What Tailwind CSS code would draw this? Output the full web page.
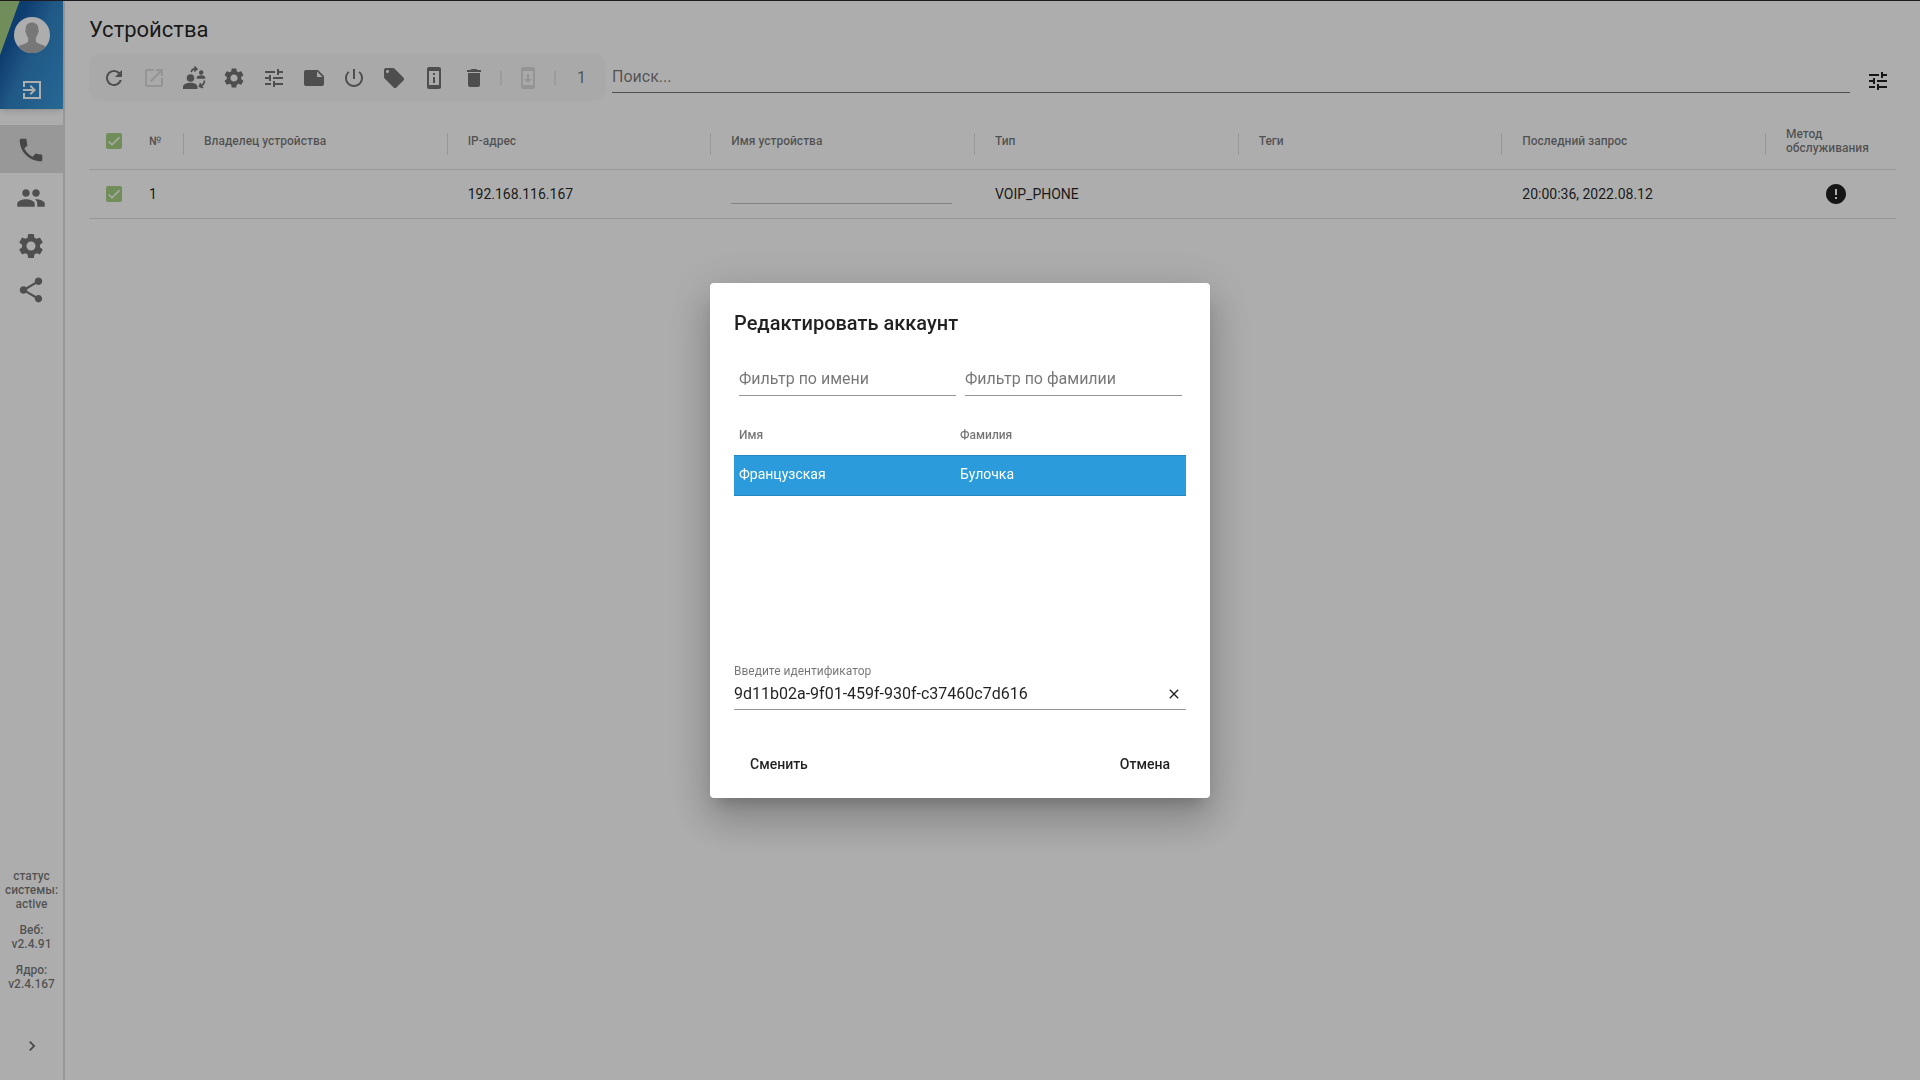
<!DOCTYPE html>
<html lang="ru">
<head>
<meta charset="utf-8">
<title>Устройства</title>
<script src="https://cdn.jsdelivr.net/npm/@tailwindcss/browser@4"></script>
</head>
<body class="bg-white font-[Roboto,sans-serif] text-sm text-black/87">
<svg class="hidden">
  <symbol id="tune" viewBox="0 0 24 24"><path d="M3 17v2h6v-2H3zM3 5v2h10V5H3zm10 16v-2h8v-2h-8v-2h-2v6h2zM7 9v2H3v2h4v2h2V9H7zm14 4v-2H11v2h10zm-6-4h2V7h4V5h-4V3h-2v6z"/></symbol>
  <symbol id="check" viewBox="0 0 24 24"><path d="M4 12.700L9 17.600 20.300 6.300" fill="none" stroke="#fff" stroke-width="2.200"/></symbol>
  <symbol id="gear" viewBox="0 0 24 24"><path d="M19.14 12.94c.04-.3.06-.61.06-.94 0-.32-.02-.64-.07-.94l2.03-1.58c.18-.14.23-.41.12-.61l-1.92-3.32c-.12-.22-.37-.29-.59-.22l-2.39.96c-.5-.38-1.03-.7-1.62-.94l-.36-2.54c-.04-.24-.24-.41-.48-.41h-3.84c-.24 0-.43.17-.47.41l-.36 2.54c-.59.24-1.13.57-1.62.94l-2.39-.96c-.22-.08-.47 0-.59.22L2.74 8.87c-.12.21-.08.47.12.61l2.03 1.58c-.05.3-.09.63-.09.94s.02.64.07.94l-2.03 1.58c-.18.14-.23.41-.12.61l1.92 3.32c.12.22.37.29.59.22l2.39-.96c.5.38 1.03.7 1.62.94l.36 2.54c.05.24.24.41.48.41h3.84c.24 0 .44-.17.47-.41l.36-2.54c.59-.24 1.13-.56 1.62-.94l2.39.96c.22.08.47 0 .59-.22l1.92-3.32c.12-.22.07-.47-.12-.61l-2.01-1.58zM12 15.6c-1.98 0-3.6-1.62-3.6-3.6s1.62-3.6 3.6-3.6 3.6 1.62 3.6 3.6-1.62 3.6-3.6 3.6z"/></symbol>
</svg>

<div class="flex min-h-screen">
  <aside class="flex w-[65px] shrink-0 flex-col border-r-2 border-black/12">
    <header class="relative flex h-[109px] flex-col items-center overflow-hidden bg-linear-115 from-[#165ba5] from-25% via-[#3083c6] via-50% to-[#3a9ada] shadow-md">
      <svg class="absolute top-0 left-0 h-[55px] w-5 fill-[#a7d285]" viewBox="0 0 20 55" preserveAspectRatio="none"><path d="M0 0h20L0 55z"/></svg>
      <svg class="relative mt-[17px] size-9" viewBox="0 0 36 36" aria-hidden="true"><circle cx="18" cy="18" r="18" fill="#fff"/><path d="M11.700 13c-.4-5 2.300-7.500 6.300-7.500s6.700 2.500 6.300 7.500c.7.300.3 3-.5 3.600-.4 2-1.200 3.400-2 4.400v3.600c1 2.100 8 3.200 9.900 5.200A18 18 0 0 1 4.300 29.800c1.900-2 8.900-3.100 9.900-5.200V21c-.8-1-1.600-2.400-2-4.400-.8-.6-1.200-3.300-.5-3.600z" fill="#b0b0b0"/></svg>
      <button class="mt-[25px] flex size-6 items-center justify-center" aria-label="Выйти">
        <svg class="size-6 fill-white" viewBox="0 0 24 24"><path d="M3 3h18v18H3v-6h2v4h14V5H5v4H3zM11 7l5 5-5 5-1.400-1.400 2.600-2.600H3v-2h9.200L9.600 8.400z"/></svg>
      </button>
    </header>
    <nav class="flex flex-col pt-4 text-black/54">
      <a href="#" class="flex h-12 items-center justify-center bg-black/12 pt-0.5 pr-0.5" aria-label="Устройства"><svg class="size-[30px] fill-current" viewBox="0 0 24 24"><path d="M6.620 10.790c1.440 2.830 3.760 5.140 6.590 6.590l2.200-2.200c.27-.27.67-.36 1.020-.24 1.120.37 2.330.57 3.570.57.55 0 1 .45 1 1V20c0 .55-.45 1-1 1-9.390 0-17-7.610-17-17 0-.55.45-1 1-1h3.500c.55 0 1 .45 1 1 0 1.250.2 2.450.57 3.570.11.35.03.74-.25 1.020l-2.200 2.200z"/></svg></a>
      <a href="#" class="flex h-12 items-center justify-center pt-0.5 pr-0.5" aria-label="Пользователи"><svg class="size-[30px] fill-current" viewBox="0 0 24 24"><path d="M16 11c1.660 0 2.990-1.340 2.990-3S17.660 5 16 5c-1.660 0-3 1.340-3 3s1.340 3 3 3zm-8 0c1.660 0 2.990-1.340 2.990-3S9.660 5 8 5C6.340 5 5 6.340 5 8s1.340 3 3 3zm0 2c-2.330 0-7 1.170-7 3.500V19h14v-2.500c0-2.330-4.670-3.500-7-3.500zm8 0c-.29 0-.62.02-.97.05 1.160.84 1.970 1.970 1.970 3.450V19h6v-2.500c0-2.330-4.670-3.500-7-3.500z"/></svg></a>
      <a href="#" class="flex h-12 items-center justify-center pt-0.5 pr-0.5" aria-label="Настройки"><svg class="size-[30px] fill-current"><use href="#gear"/></svg></a>
      <a href="#" class="flex h-10 items-center justify-center pt-0.5 pr-0.5" aria-label="Связи"><svg class="size-[30px] fill-current" viewBox="0 0 24 24"><path d="M18 16.080c-.76 0-1.440.3-1.960.77L8.910 12.700c.05-.23.09-.46.09-.7s-.04-.47-.09-.7l7.050-4.110c.54.5 1.250.81 2.040.81 1.660 0 3-1.340 3-3s-1.340-3-3-3-3 1.340-3 3c0 .24.04.47.09.7L8.040 9.810C7.500 9.310 6.790 9 6 9c-1.660 0-3 1.340-3 3s1.340 3 3 3c.79 0 1.500-.31 2.040-.81l7.120 4.160c-.05.21-.08.43-.08.65 0 1.610 1.310 2.920 2.920 2.920s2.920-1.310 2.920-2.920-1.310-2.920-2.920-2.920z"/></svg></a>
    </nav>
    <div class="mt-auto flex flex-col gap-3 pb-[43px] text-center text-xs leading-[14px] font-medium text-black/54">
      <p>статус системы: active</p>
      <p>Веб:<br>v2.4.91</p>
      <p>Ядро:<br>v2.4.167</p>
    </div>
    <button class="mb-[22px] flex h-6 items-center justify-center" aria-label="Развернуть меню"><svg class="size-5 fill-black/60" viewBox="0 0 24 24"><path d="M10 6L8.590 7.410 13.170 12l-4.580 4.590L10 18l6-6z"/></svg></button>
  </aside>

  <main class="min-w-0 flex-1 px-6">
    <h1 class="pt-3.5 text-[22px] leading-8">Устройства</h1>
    <div class="mt-[7px] flex h-12 items-center">
      <div class="flex h-12 shrink-0 items-center rounded-xl bg-black/2 pt-0.5 pr-5 pl-[5px] text-black/54" role="toolbar">
        <button class="flex size-10 items-center justify-center" aria-label="Обновить"><svg class="size-6 fill-current" viewBox="0 0 24 24"><path d="M17.650 6.350C16.200 4.900 14.210 4 12 4c-4.420 0-7.990 3.580-7.990 8s3.570 8 7.990 8c3.730 0 6.840-2.550 7.730-6h-2.080c-.82 2.330-3.040 4-5.650 4-3.310 0-6-2.690-6-6s2.690-6 6-6c1.660 0 3.140.69 4.220 1.780L13 11h7V4l-2.350 2.350z"/></svg></button>
        <button disabled class="flex size-10 items-center justify-center text-black/12" aria-label="Открыть"><svg class="size-6 fill-current" viewBox="0 0 24 24"><path d="M19 19H5V5h7V3H5c-1.110 0-2 .9-2 2v14c0 1.100.89 2 2 2h14c1.100 0 2-.9 2-2v-7h-2v7zM14 3v2h3.590l-9.830 9.830 1.410 1.410L19 6.410V10h2V3h-7z"/></svg></button>
        <button class="flex size-10 items-center justify-center" aria-label="Сменить владельца"><svg class="size-6 fill-current" viewBox="0 0 24 24"><circle cx="8.500" cy="12" r="3.800"/><path d="M1 23v-2.200c0-2.700 4.500-4 7.500-4s7 1.300 7 4V23z"/><circle cx="19.200" cy="6.500" r="2.200"/><path d="M14.700 12.800v-1.200c0-1.600 2.700-2.400 4.500-2.400s4 .8 4 2.400v1.200z"/><path d="M8.500 6c.3-2.400 2-3.800 4.300-3.900L11.700.9 12.900 0l3.200 3-3.200 3-1.100-1 1.100-1.300c-1.500.1-2.500.9-2.900 2.600zM21.600 14.500h1.600c0 2.600-1 4.600-3.200 5.700l1.500.9-.6 1.300-4.400-1.300 1.300-4.300 1.400.4-.4 1.600c1.800-.8 2.800-2.200 2.800-4.300z"/></svg></button>
        <button class="flex size-10 items-center justify-center" aria-label="Настройки"><svg class="size-6 fill-current"><use href="#gear"/></svg></button>
        <button class="flex size-10 items-center justify-center" aria-label="Параметры"><svg class="size-6 fill-current"><use href="#tune"/></svg></button>
        <button class="flex size-10 items-center justify-center" aria-label="Заметка"><svg class="size-6 fill-current" viewBox="0 0 24 24"><path d="M14 4H4c-1.100 0-2 .9-2 2v12.010c0 1.100.9 1.990 2 1.990h16c1.100 0 2-.9 2-2v-8l-6-6z M15 5.500l5.500 5.500H15z" fill-rule="evenodd"/></svg></button>
        <button class="flex size-10 items-center justify-center" aria-label="Питание"><svg class="size-6 fill-current" viewBox="0 0 24 24"><path d="M13 3h-2v10h2V3zm4.830 2.170l-1.420 1.420C17.990 7.860 19 9.810 19 12c0 3.870-3.130 7-7 7s-7-3.130-7-7c0-2.190 1.010-4.140 2.580-5.420L6.170 5.170C4.230 6.820 3 9.260 3 12c0 4.970 4.030 9 9 9s9-4.030 9-9c0-2.740-1.230-5.180-3.170-6.830z"/></svg></button>
        <button class="flex size-10 items-center justify-center" aria-label="Теги"><svg class="size-6 fill-current" viewBox="0 0 24 24"><path d="M21.410 11.580l-9-9C12.050 2.220 11.550 2 11 2H4c-1.100 0-2 .9-2 2v7c0 .55.22 1.050.59 1.420l9 9c.36.36.86.58 1.410.58.55 0 1.050-.22 1.410-.59l7-7c.37-.36.59-.86.59-1.410 0-.55-.23-1.060-.59-1.420zM5.500 7C4.670 7 4 6.330 4 5.500S4.670 4 5.500 4 7 4.670 7 5.500 6.330 7 5.500 7z"/></svg></button>
        <button class="flex size-10 items-center justify-center" aria-label="Информация"><svg class="size-6 fill-current" viewBox="0 0 24 24"><path d="M17 1.010L7 1c-1.100 0-2 .9-2 2v18c0 1.100.9 2 2 2h10c1.100 0 2-.9 2-2V3c0-1.100-.9-1.990-2-1.990zM17 19H7V5h10v14zM11 7h2v2h-2zM11 11h2v6h-2z"/></svg></button>
        <button class="flex size-10 items-center justify-center" aria-label="Удалить"><svg class="size-6 fill-current" viewBox="0 0 24 24"><path d="M6 19c0 1.100.9 2 2 2h8c1.100 0 2-.9 2-2V7H6v12zM19 4h-3.500l-1-1h-5l-1 1H5v2h14V4z"/></svg></button>
        <span class="mx-[6px] h-3.5 w-[2px] bg-black/8"></span>
        <button disabled class="flex size-10 items-center justify-center text-black/12" aria-label="Обновить прошивку"><svg class="size-6 fill-current" viewBox="0 0 24 24"><path d="M17 1.010L7 1c-1.100 0-2 .9-2 2v18c0 1.100.9 2 2 2h10c1.100 0 2-.9 2-2V3c0-1.100-.9-1.990-2-1.990zM17 19H7V5h10v14zM16 13h-3V8h-2v5H8l4 4z"/></svg></button>
        <span class="mx-[6px] h-3.5 w-[2px] bg-black/8"></span>
        <span class="ml-[15px] text-base">1</span>
      </div>
      <input type="search" placeholder="Поиск..." aria-label="Поиск" class="my-[7px] ml-1.5 h-8 min-w-0 flex-1 border-b border-black/54 text-base outline-none placeholder:text-black/54">
      <button class="mt-2 mr-[6px] ml-4 flex size-6 items-center justify-center" aria-label="Фильтры"><svg class="size-6 fill-current"><use href="#tune"/></svg></button>
    </div>

    <table class="mt-3 w-full table-fixed border-collapse text-left">
      <colgroup><col class="w-[50px]"><col class="w-[45px]"><col><col><col><col><col><col><col class="w-[130px]"></colgroup>
      <thead class="text-xs leading-[14px] text-black/54">
        <tr class="h-14 border-b border-black/12">
          <th class="p-0 pl-[17px]"><label class="relative block size-4"><input type="checkbox" checked aria-label="Выбрать все" class="block size-4 appearance-none rounded-xs bg-[#a7d285]"><svg class="pointer-events-none absolute inset-0 size-4"><use href="#check"/></svg></label></th>
          <th class="p-0 font-medium"><div class="relative flex h-7 items-center pl-[10px] after:absolute after:top-[6px] after:right-0 after:h-[22px] after:w-px after:bg-black/12">№</div></th>
          <th class="p-0 font-medium"><div class="relative flex h-7 items-center pl-5 after:absolute after:top-[6px] after:right-0 after:h-[22px] after:w-px after:bg-black/12">Владелец устройства</div></th>
          <th class="p-0 font-medium"><div class="relative flex h-7 items-center pl-5 after:absolute after:top-[6px] after:right-0 after:h-[22px] after:w-px after:bg-black/12">IP-адрес</div></th>
          <th class="p-0 font-medium"><div class="relative flex h-7 items-center pl-5 after:absolute after:top-[6px] after:right-0 after:h-[22px] after:w-px after:bg-black/12">Имя устройства</div></th>
          <th class="p-0 font-medium"><div class="relative flex h-7 items-center pl-5 after:absolute after:top-[6px] after:right-0 after:h-[22px] after:w-px after:bg-black/12">Тип</div></th>
          <th class="p-0 font-medium"><div class="relative flex h-7 items-center pl-5 after:absolute after:top-[6px] after:right-0 after:h-[22px] after:w-px after:bg-black/12">Теги</div></th>
          <th class="p-0 font-medium"><div class="relative flex h-7 items-center pl-5 after:absolute after:top-[6px] after:right-0 after:h-[22px] after:w-px after:bg-black/12">Последний запрос</div></th>
          <th class="p-0 font-medium"><div class="pl-5">Метод обслуживания</div></th>
        </tr>
      </thead>
      <tbody>
        <tr class="h-[49px] border-b border-black/12">
          <td class="p-0 pl-[17px]"><label class="relative block size-4"><input type="checkbox" checked aria-label="Выбрать устройство 1" class="block size-4 appearance-none rounded-xs bg-[#a7d285]"><svg class="pointer-events-none absolute inset-0 size-4"><use href="#check"/></svg></label></td>
          <td class="pl-[10px]">1</td>
          <td class="pl-5"></td>
          <td class="pl-5">192.168.116.167</td>
          <td class="pr-[23px] pl-5"><input type="text" aria-label="Имя устройства" class="block h-5 w-full border-b border-black/24 outline-none"></td>
          <td class="pl-5">VOIP_PHONE</td>
          <td class="pl-5"></td>
          <td class="pl-5">20:00:36, 2022.08.12</td>
          <td class="pl-[58px]"><svg class="size-6 fill-current" viewBox="0 0 24 24" role="img" aria-label="Внимание"><path d="M12 2C6.480 2 2 6.480 2 12s4.480 10 10 10 10-4.480 10-10S17.520 2 12 2zm1 15h-2v-2h2v2zm0-4h-2V7h2v6z"/></svg></td>
        </tr>
      </tbody>
    </table>
  </main>
</div>

<div class="fixed inset-0 flex items-center justify-center border-t border-[#1b1b20] bg-black/32">
  <form role="dialog" aria-labelledby="dialog-title" class="w-[500px] rounded bg-white px-6 pb-4 shadow-[0_11px_15px_-7px_rgba(0,0,0,0.2),0_24px_38px_3px_rgba(0,0,0,0.14),0_9px_46px_8px_rgba(0,0,0,0.12)]">
    <h2 id="dialog-title" class="pt-6 text-xl leading-8 font-medium">Редактировать аккаунт</h2>
    <div class="mt-[21px] flex gap-[9px] pr-1 pl-[5px]">
      <input type="text" placeholder="Фильтр по имени" aria-label="Фильтр по имени" class="h-9 min-w-0 flex-1 border-b border-black/42 pt-0.5 text-base outline-none placeholder:text-black/54">
      <input type="text" placeholder="Фильтр по фамилии" aria-label="Фильтр по фамилии" class="h-9 min-w-0 flex-1 border-b border-black/42 pt-0.5 text-base outline-none placeholder:text-black/54">
    </div>
    <div class="mt-4 h-[251px]">
      <table class="w-full table-fixed border-collapse text-left">
        <colgroup><col class="w-[221px]"><col></colgroup>
        <thead>
          <tr class="h-[43px] border-b border-black/12 text-xs text-black/54"><th class="pt-[3px] pl-[5px] font-medium">Имя</th><th class="pt-[3px] pl-[5px] font-medium">Фамилия</th></tr>
        </thead>
        <tbody>
          <tr class="h-10 border-b border-[#2688c1] bg-[#2b9bdb] text-white"><td class="pb-0.5 pl-[5px]">Французская</td><td class="pb-0.5 pl-[5px]">Булочка</td></tr>
        </tbody>
      </table>
    </div>
    <div class="border-b border-black/42">
      <label for="account-id" class="block text-xs leading-4 text-black/54">Введите идентификатор</label>
      <div class="flex h-[30px] items-center pr-1">
        <input id="account-id" type="text" value="9d11b02a-9f01-459f-930f-c37460c7d616" class="h-6 min-w-0 flex-1 text-base outline-none">
        <button type="button" aria-label="Очистить" class="flex size-4 items-center justify-center"><svg class="size-4 fill-current" viewBox="0 0 24 24"><path d="M19 6.410L17.590 5 12 10.590 6.410 5 5 6.410 10.590 12 5 17.590 6.410 19 12 13.410 17.590 19 19 17.590 13.410 12z"/></svg></button>
      </div>
    </div>
    <div class="mt-9 flex justify-between">
      <button type="submit" class="h-9 rounded px-4 font-medium">Сменить</button>
      <button type="button" class="h-9 rounded px-4 font-medium">Отмена</button>
    </div>
  </form>
</div>
</body>
</html>
